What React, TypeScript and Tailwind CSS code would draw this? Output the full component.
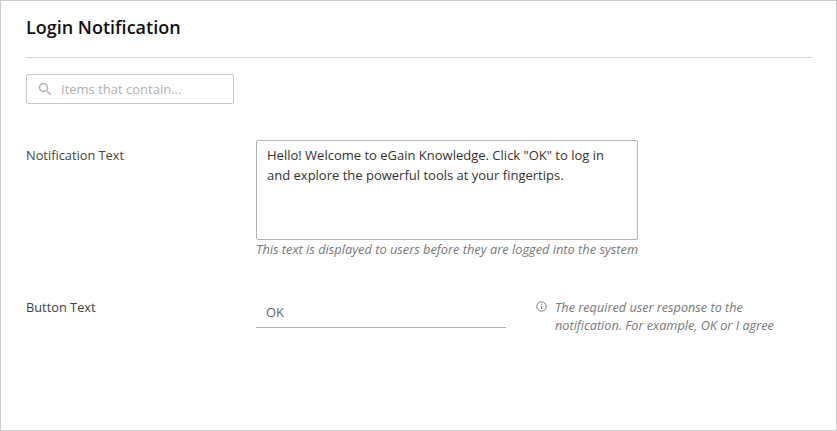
export default function App() {
  return (
    <div className="w-[837px] h-[431px] bg-white border border-[#cccccc] pl-[25px] pr-[24px] font-['Open_Sans',sans-serif] overflow-hidden">
      <div className="h-[57px] border-b border-[#d9d9d9] pt-[14px]">
        <h1 className="text-[18px] leading-[25px] font-semibold text-[#111111]">Login Notification</h1>
      </div>
      <div className="mt-[16px] w-[208px] h-[30px] border border-[#c8c8c8] rounded-[2px] flex items-center pl-[11px]">
        <svg width="14" height="14" viewBox="0 0 14 14" fill="none" stroke="#b3b3b3" strokeWidth="1.5">
          <circle cx="5.5" cy="5.5" r="4" />
          <path d="M8.5 8.5L13 13" />
        </svg>
        <span className="ml-[9px] pt-[2px] text-[13px] text-[#b0b0b0]">Items that contain...</span>
      </div>
      <div className="mt-[36px] flex">
        <div className="w-[230px] pt-[5px] text-[12.8px] leading-[20px] text-[#444444]">Notification Text</div>
        <div className="w-[382px]">
          <div className="h-[100px] border border-[#b3b3b3] rounded-[2px] pl-[10px] pr-[8px] pt-[4px] text-[13px] leading-[20px] text-[#333333]">
            Hello! Welcome to eGain Knowledge. Click "OK" to log in and explore the powerful tools at your fingertips.
          </div>
          <div className="text-[12.8px] leading-[18px] italic text-[#777777] whitespace-nowrap">This text is displayed to users before they are logged into the system</div>
        </div>
      </div>
      <div className="mt-[39px] flex">
        <div className="w-[230px] text-[12.8px] leading-[20px] text-[#444444]">Button Text</div>
        <div className="w-[250px] h-[31px] border-b border-[#b0b0b0] pl-[10px] pt-[5px] text-[13px] leading-[20px] text-[#666666]">OK</div>
        <div className="ml-[30px] flex pt-[1px]">
          <svg className="mt-[3px]" width="11" height="11" viewBox="0 0 11 11" fill="none" stroke="#777777" strokeWidth="1">
            <circle cx="5.5" cy="5.5" r="4.7" />
            <path d="M5.5 5v3M5.5 2.6v1.2" />
          </svg>
          <div className="ml-[8px] w-[240px] text-[12.7px] leading-[18px] italic text-[#777777]">
            The required user response to the notification. For example, OK or I agree
          </div>
        </div>
      </div>
    </div>
  );
}
